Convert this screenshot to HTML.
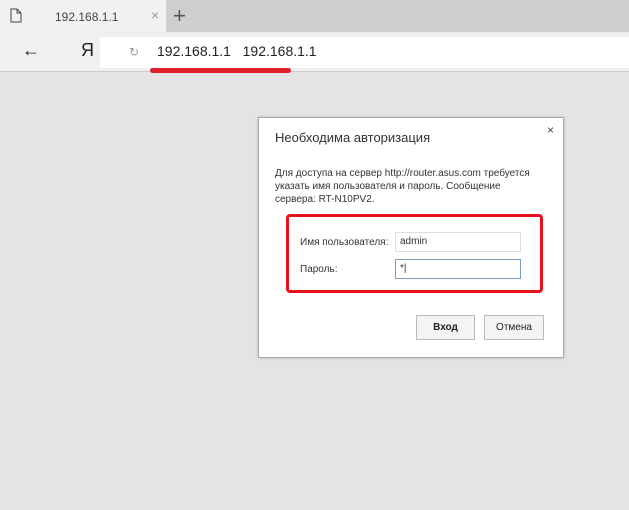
<!DOCTYPE html>
<html><head><meta charset="utf-8"><style>
*{margin:0;padding:0;box-sizing:border-box}
body{width:629px;height:510px;background:#e4e4e4;font-family:"Liberation Sans","DejaVu Sans",sans-serif;position:relative;overflow:hidden}
.a{position:absolute}
</style></head><body>
<div class="a" style="left:0;top:0;width:629px;height:32px;background:#cfcfcf"></div>
<div class="a" style="left:0;top:0;width:166px;height:32px;background:#f1f1f1"></div>
<svg class="a" style="left:10px;top:8px" width="12" height="15"><path d="M1 1h6l4 4v9H1z M7 1v4h4" fill="none" stroke="#444" stroke-width="1"/></svg>
<div class="a" style="left:55px;top:10px;font-size:12px;color:#444">192.168.1.1</div>
<div class="a" style="left:151px;top:7px;font-size:14px;color:#999">×</div>
<div class="a" style="left:173px;top:3px;font-size:22px;color:#555">+</div>
<div class="a" style="left:0;top:32px;width:629px;height:40px;background:#f0f0f0;border-bottom:1px solid #ccc"></div>
<div class="a" style="left:22px;top:40px;font-size:18px;color:#222">←</div>
<div class="a" style="left:81px;top:40px;font-size:18px;color:#222">Я</div>
<div class="a" style="left:100px;top:37px;width:529px;height:31px;background:#fff"></div>
<div class="a" style="left:129px;top:45px;font-size:12px;color:#999">↻</div>
<div class="a" style="left:157px;top:43px;font-size:14px;color:#222">192.168.1.1&nbsp;&nbsp;&nbsp;192.168.1.1</div>
<div class="a" style="left:150px;top:68px;width:141px;height:5px;background:#e0202a;border-radius:3px"></div>
<div class="a" style="left:258px;top:117px;width:306px;height:241px;background:#fff;border:1px solid #aaa;box-shadow:0 0 3px rgba(0,0,0,.2)"></div>
<div class="a" style="left:275px;top:130px;font-size:13px;color:#333">Необходима авторизация</div>
<div class="a" style="left:547px;top:123px;font-size:12px;color:#444">×</div>
<div class="a" style="left:275px;top:167px;font-size:10px;line-height:13px;color:#333;width:262px">Для доступа на сервер http://router.asus.com требуется указать имя пользователя и пароль. Сообщение<br>сервера: RT-N10PV2.</div>
<div class="a" style="left:286px;top:214px;width:257px;height:79px;border:3px solid #e8101c;border-radius:4px"></div>
<div class="a" style="left:300px;top:237px;font-size:10px;color:#333">Имя пользователя:</div>
<div class="a" style="left:300px;top:264px;font-size:10px;color:#333">Пароль:</div>
<div class="a" style="left:395px;top:232px;width:126px;height:20px;border:1px solid #ddd;font-size:10px;padding:3px 4px;color:#333">admin</div>
<div class="a" style="left:395px;top:259px;width:126px;height:20px;border:1px solid #7a9cc8;font-size:10px;padding:3px 4px;color:#333">*|</div>
<div class="a" style="left:416px;top:315px;width:59px;height:25px;border:1px solid #bbb;background:#f4f4f4;font-size:10px;font-weight:bold;text-align:center;line-height:23px;color:#222">Вход</div>
<div class="a" style="left:484px;top:315px;width:60px;height:25px;border:1px solid #bbb;background:#f4f4f4;font-size:10px;text-align:center;line-height:23px;color:#222">Отмена</div>
</body></html>
